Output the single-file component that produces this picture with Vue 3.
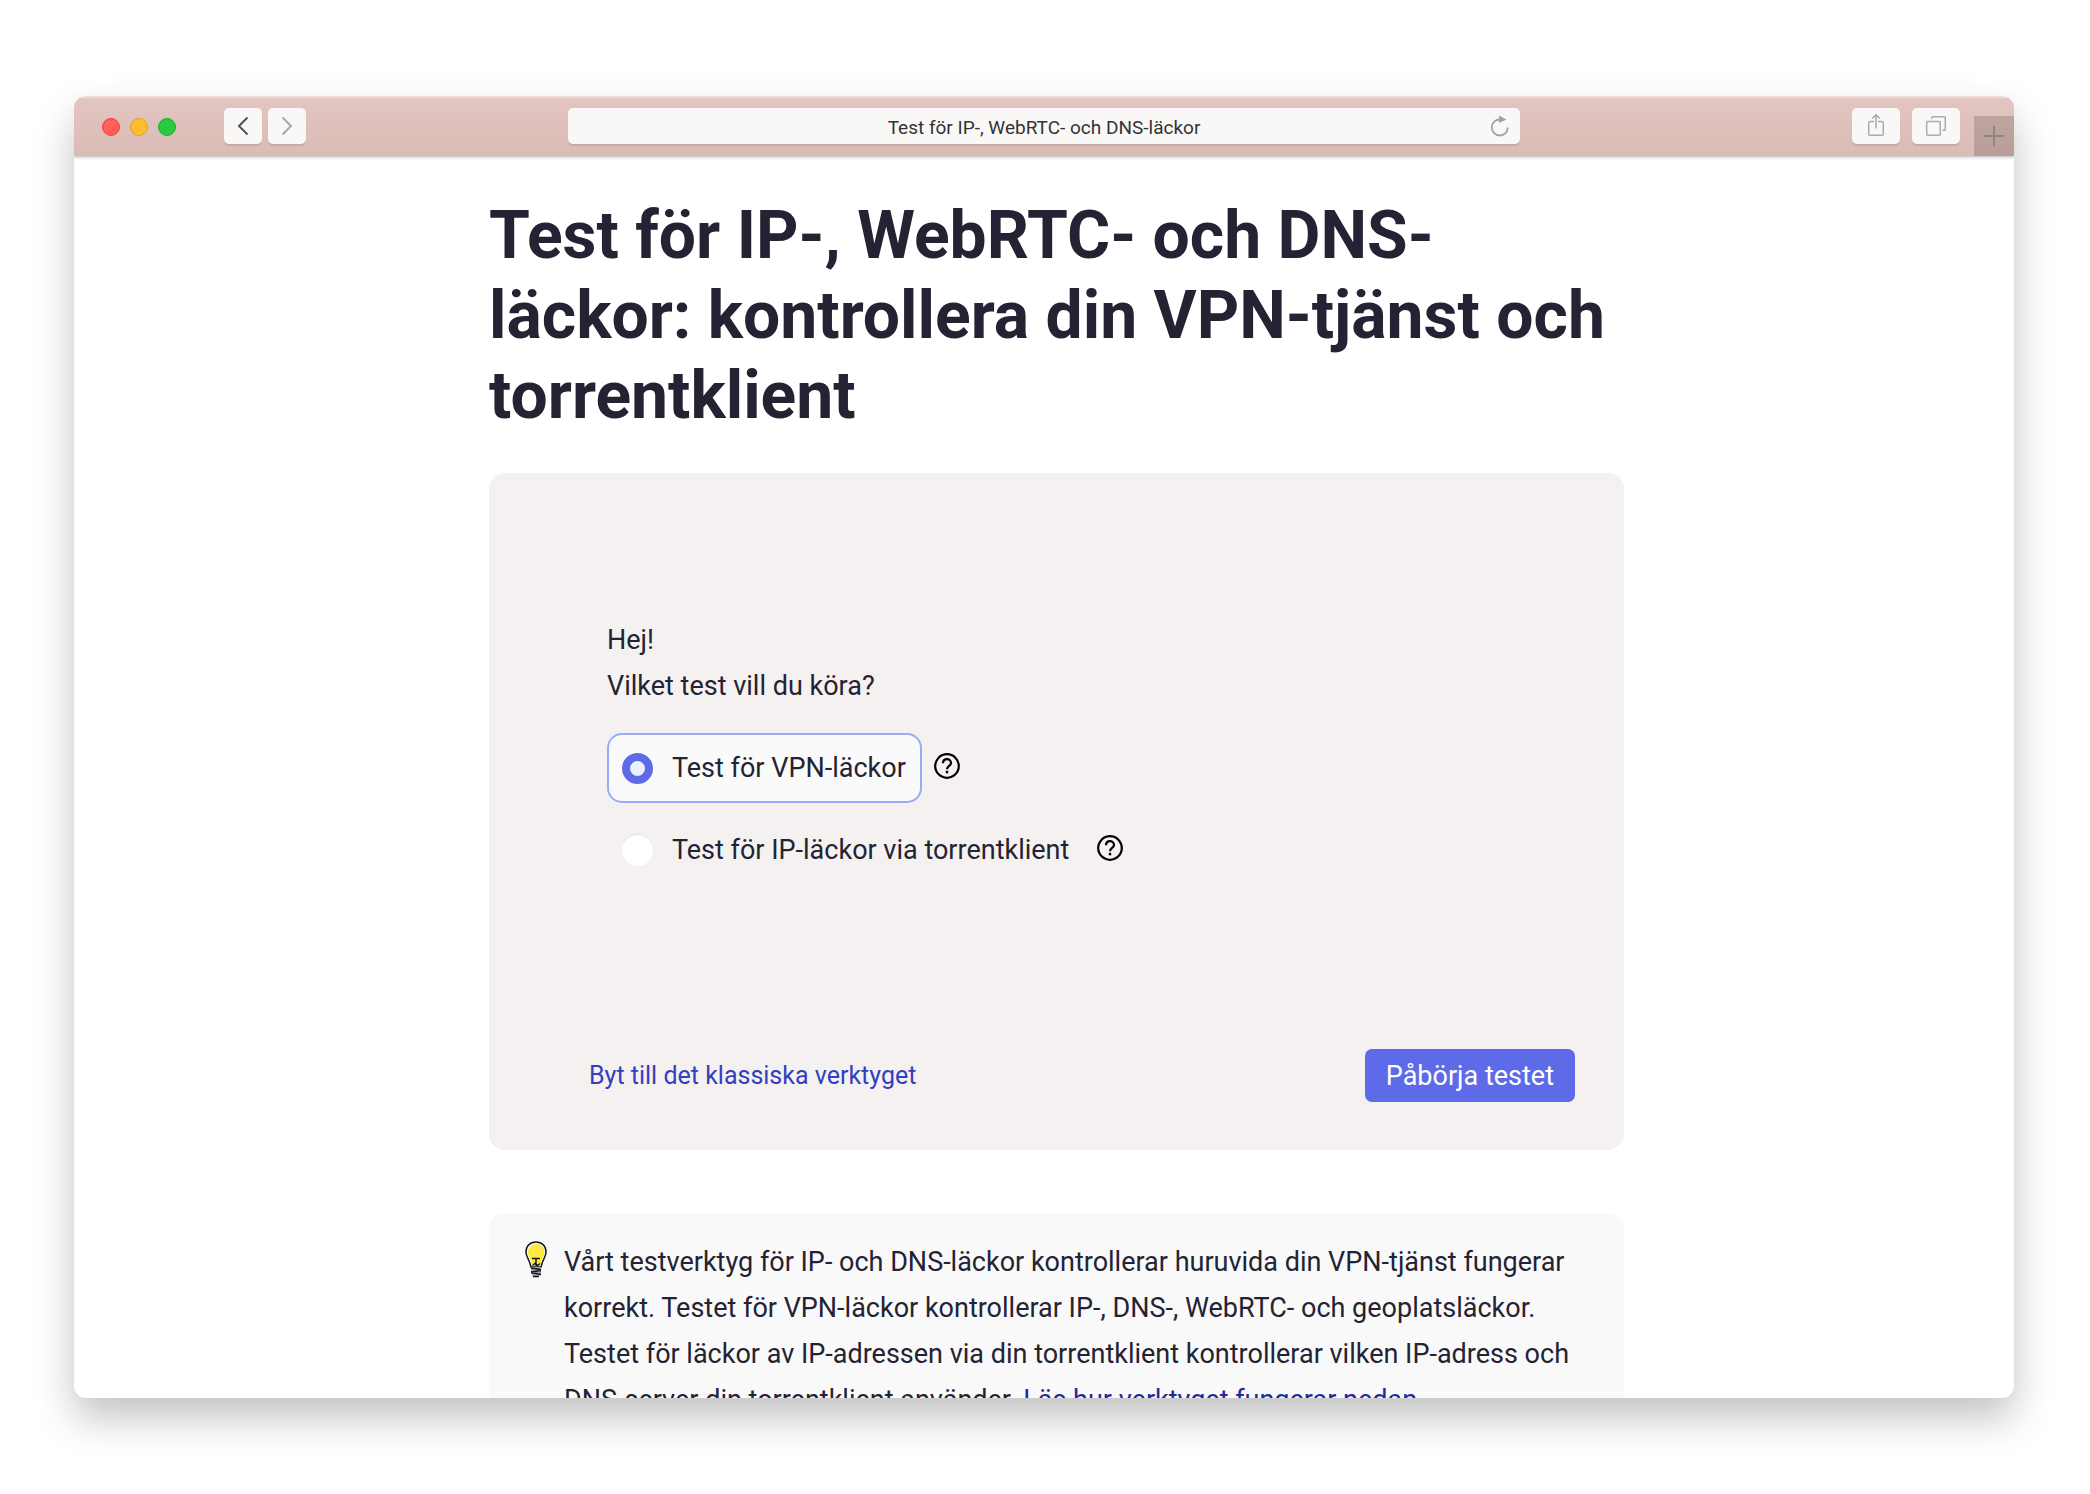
<script setup>
import { ref } from 'vue';

const pageTitle = 'Test för IP-, WebRTC- och DNS-läckor';

const tests = [
  { id: 'vpn', label: 'Test för VPN-läckor' },
  { id: 'torrent', label: 'Test för IP-läckor via torrentklient' },
];

const selected = ref('vpn');
</script>

<template>
  <div class="desktop">
    <div class="window">
      <header class="toolbar">
        <div class="toolbar-left">
          <div class="lights">
            <span class="light red"></span>
            <span class="light yellow"></span>
            <span class="light green"></span>
          </div>
          <div class="nav-buttons">
            <button class="tool nav" aria-label="Bakåt">
              <svg width="38" height="36" viewBox="0 0 38 36" fill="none" stroke="#51515d" stroke-width="2"><path d="M23.500 9.500L15 18L23.500 26.500" /></svg>
            </button>
            <button class="tool nav" aria-label="Framåt">
              <svg width="38" height="36" viewBox="0 0 38 36" fill="none" stroke="#a9a9ad" stroke-width="2"><path d="M14.500 9.500L23 18L14.500 26.500" /></svg>
            </button>
          </div>
        </div>
        <div class="address">
          <span class="address-text">{{ pageTitle }}</span>
          <button class="reload" aria-label="Ladda om">
            <svg width="20" height="22" viewBox="0 0 20 22">
              <path d="M10 4.500A8 8 0 1 0 17.800 12.500" fill="none" stroke="#a3a3a7" stroke-width="1.800" />
              <path d="M9 0.500L16.500 4.500L9 8Z" fill="#a3a3a7" />
            </svg>
          </button>
        </div>
        <div class="toolbar-right">
          <button class="tool wide" aria-label="Dela">
            <svg width="48" height="36" viewBox="0 0 48 36" fill="none" stroke="#a9a9b0" stroke-width="1.500">
              <path d="M22 13.500H18Q16.700 13.500 16.700 15V26Q16.700 27.300 18 27.300H30Q31.300 27.300 31.300 26V15Q31.300 13.500 30 13.500H26" />
              <path d="M24 20.500V7M20.200 10.500L24 6.700L27.800 10.500" />
            </svg>
          </button>
          <button class="tool wide" aria-label="Visa flikar">
            <svg width="48" height="36" viewBox="0 0 48 36" fill="none" stroke="#a9a9b0" stroke-width="1.500">
              <rect x="14.700" y="13.500" width="13.500" height="13.800" rx="1" />
              <path d="M19.700 11V9.500Q19.700 8.700 20.500 8.700H32.500Q33.300 8.700 33.300 9.500V21.500Q33.300 22.300 32.500 22.300H30.500" />
            </svg>
          </button>
          <button class="new-tab" aria-label="Ny flik">
            <svg width="20" height="20" viewBox="0 0 20 20" stroke="#94817f" stroke-width="1.800"><path d="M10 0V20M0 10H20" /></svg>
          </button>
        </div>
      </header>

      <main class="page">
        <div class="content">
          <h1>Test för IP-, WebRTC- och DNS-läckor: kontrollera din VPN-tjänst och torrentklient</h1>

          <form class="test-card" @submit.prevent>
            <div class="question">
              <p>Hej!</p>
              <p>Vilket test vill du köra?</p>
            </div>
            <div class="options">
              <div v-for="test in tests" :key="test.id" class="option-row">
                <label class="option" :class="{ active: selected === test.id }">
                  <input v-model="selected" type="radio" name="test" :value="test.id" />
                  <span>{{ test.label }}</span>
                </label>
                <button type="button" class="help" aria-label="Hjälp">
                  <svg width="26" height="26" viewBox="0 0 26 26" fill="none" stroke="#000">
                    <circle cx="13" cy="13" r="11.800" stroke-width="2.200" />
                    <path d="M9 10.300C9 7.700 10.800 6.200 13 6.200S17 7.700 17 9.900C17 12.700 13 13 13 16.200" stroke-width="2.200" />
                    <path d="M13 17.800V20.300" stroke-width="2.400" />
                  </svg>
                </button>
              </div>
            </div>
            <div class="actions">
              <a href="#" class="classic-link">Byt till det klassiska verktyget</a>
              <button type="submit" class="start">Påbörja testet</button>
            </div>
          </form>

          <section class="info">
            <svg class="bulb" width="22" height="37" viewBox="0 0 22 37">
              <path d="M11 1C5 1 1 5.200 1 11C1 16 4.500 18.500 6 26H16C17.500 18.500 21 16 21 11C21 5.200 17 1 11 1Z" fill="#fff" stroke="#15151c" stroke-width="1.500" />
              <path d="M11.500 3C7 3 3 6.500 3 11.500C3 16 6.500 18.500 7 25H15.500C16 19 19.500 16 19.500 11C19.500 6 16 3 11.500 3Z" fill="#fde93f" />
              <path d="M7 17.500H15M11 17.500V25M7.500 24.500L10 22.500L12.500 24.500L15 22.500" fill="none" stroke="#15151c" stroke-width="1.400" />
              <path d="M6 26H16V33L13.500 36H8.500L6 33Z" fill="#a9a9a9" />
              <path d="M6 27L16 28.500M6 31L16 29.500M6 31.500L16 33.500M8 35.500H14" stroke="#15151c" stroke-width="1.600" />
            </svg>
            <p>
              Vårt testverktyg för IP- och DNS-läckor kontrollerar huruvida din VPN-tjänst fungerar korrekt. Testet för VPN-läckor kontrollerar IP-, DNS-, WebRTC- och geoplatsläckor. Testet för läckor av IP-adressen via din torrentklient kontrollerar vilken IP-adress och DNS-server din torrentklient använder. <a href="#">Läs hur verktyget fungerar nedan.</a>
            </p>
          </section>
        </div>
      </main>
    </div>
  </div>
</template>

<style>
  body {
    background: #fff;
  }
</style>

<style scoped>
  * {
    box-sizing: border-box;
  }
  h1,
  p {
    margin: 0;
  }
  button {
    border: 0;
    padding: 0;
    font-family: inherit;
    cursor: pointer;
  }
  svg {
    display: block;
  }
  .desktop {
    height: 100vh;
    padding: 96px 76px 96px 74px;
    font-family: Roboto, "Liberation Sans", sans-serif;
    color: #232333;
  }
  .window {
    display: flex;
    flex-direction: column;
    height: 100%;
    border-radius: 12px;
    overflow: hidden;
    background: #fff;
    box-shadow: 0 20px 40px rgba(0, 0, 0, 0.24);
  }

  .toolbar {
    display: grid;
    grid-template-columns: 1fr 952px 1fr;
    flex: none;
    height: 60px;
    border-top: 2px solid #eedcd9;
    background: linear-gradient(#e3c6c1, #dabbb6);
    box-shadow: 0 1px 3px rgba(0, 0, 0, 0.3);
    z-index: 1;
  }
  .toolbar-left {
    display: flex;
    align-items: flex-start;
    gap: 48px;
    padding: 10px 0 0 28px;
  }
  .lights {
    display: flex;
    align-items: center;
    gap: 10px;
    height: 38px;
  }
  .light {
    width: 18px;
    height: 18px;
    border: 1px solid;
    border-radius: 50%;
  }
  .red {
    background: #ff5f57;
    border-color: #e2463f;
  }
  .yellow {
    background: #ffbd2e;
    border-color: #e1a025;
  }
  .green {
    background: #28ca42;
    border-color: #1dad2b;
  }
  .nav-buttons {
    display: flex;
    gap: 6px;
  }
  .tool {
    height: 36px;
    border-radius: 5px;
    background: #faf8f7;
    box-shadow: 0 2px 0 #c9aaa6;
  }
  .nav {
    width: 38px;
  }
  .wide {
    width: 48px;
  }
  .address {
    display: grid;
    grid-template-columns: 40px 1fr 40px;
    align-items: center;
    height: 36px;
    margin-top: 10px;
    border-radius: 5px;
    background: #faf8f7;
    box-shadow: 0 2px 0 #c9aaa6;
  }
  .address-text {
    grid-column: 2;
    padding-top: 2px;
    text-align: center;
    font-size: 19px;
    color: #333;
  }
  .reload {
    display: flex;
    justify-content: center;
    background: none;
  }
  .toolbar-right {
    display: flex;
    justify-content: flex-end;
    align-items: flex-start;
    gap: 12px;
    padding-top: 10px;
  }
  .new-tab {
    display: flex;
    align-items: center;
    justify-content: center;
    align-self: flex-end;
    width: 40px;
    height: 40px;
    margin-left: 2px;
    background: linear-gradient(#bda6a0, #b99d99);
  }

  .page {
    display: grid;
    grid-template-columns: 415fr 1135fr 390fr;
    flex: 1;
    min-height: 0;
    overflow: hidden;
  }
  .content {
    grid-column: 2;
    padding-top: 40px;
  }
  h1 {
    font-size: 66px;
    line-height: 80px;
    font-weight: 700;
  }
  .test-card {
    display: flex;
    flex-direction: column;
    margin-top: 37px;
    padding: 144px 49px 48px 118px;
    border-radius: 16px;
    background: #f5f1f0;
  }
  .question {
    font-size: 27px;
    line-height: 46px;
  }
  .options {
    display: flex;
    flex-direction: column;
    gap: 12px;
    margin-top: 24px;
  }
  .option-row {
    display: flex;
    align-items: center;
    gap: 12px;
  }
  .option {
    display: flex;
    align-items: center;
    gap: 19px;
    height: 70px;
    padding: 0 14px 0 13px;
    border: 2px solid transparent;
    border-radius: 15px;
    font-size: 27px;
    cursor: pointer;
  }
  .option.active {
    border-color: #97acf9;
    background: #fafafa;
  }
  .option input {
    appearance: none;
    width: 31px;
    height: 31px;
    margin: 0;
    border-radius: 50%;
    background: #fff;
    box-shadow: 0 -1px 1px #e6e2e1;
  }
  .option input:checked {
    border: 8px solid #5e6be8;
    background: #e9effd;
    box-shadow: none;
  }
  .help {
    padding-bottom: 4px;
    background: none;
  }
  .actions {
    display: flex;
    justify-content: space-between;
    align-items: center;
    margin-top: 164px;
    margin-left: -18px;
  }
  .classic-link {
    font-size: 25px;
    color: #323fbf;
    text-decoration: none;
  }
  .start {
    height: 53px;
    padding: 0 21px;
    border-radius: 7px;
    background: #5e6be8;
    color: #fff;
    font-size: 27px;
  }
  .info {
    display: flex;
    align-items: flex-start;
    gap: 17px;
    margin-top: 63px;
    padding: 26px 40px 26px 36px;
    border-radius: 16px;
    background: #f9f9f9;
  }
  .bulb {
    flex: none;
    margin-top: 2px;
  }
  .info p {
    font-size: 27px;
    line-height: 46px;
  }
  .info a {
    color: #1f2a9d;
    text-decoration: none;
  }
</style>
